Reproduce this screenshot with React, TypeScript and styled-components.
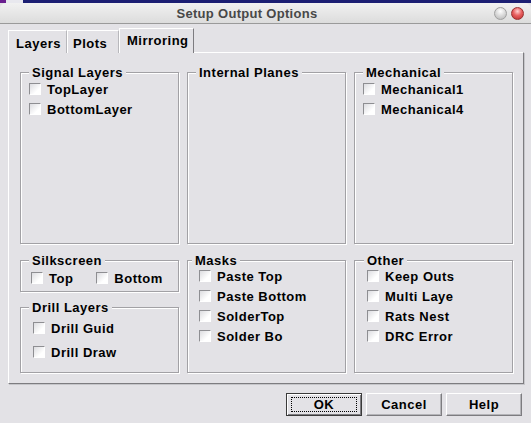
import { createGlobalStyle } from 'styled-components';
import styled from 'styled-components';

const Colors = {
  face: '#e3e2e6',
  light: '#ffffff',
  etch: '#a2a1a5',
  shadow: '#7d7c80',
  dark: '#3a3a3a',
  text: '#000000',
};

const GlobalStyle = createGlobalStyle`
  html, body {
    margin: 0;
    padding: 0;
    background: ${Colors.face};
  }
  body {
    font-family: "Liberation Sans", Arial, sans-serif;
  }
`;

export const Window = styled.div`
  width: 531px;
  height: 423px;
  display: flex;
  flex-direction: column;
  background: ${Colors.face};
  overflow: hidden;
  font-family: "Liberation Sans", Arial, sans-serif;
  font-weight: bold;
  font-size: 13px;
  letter-spacing: 0.5px;
  color: ${Colors.text};
`;

export const TopStrip = styled.div`
  height: 3px;
  background: linear-gradient(
    to right,
    #6a1f8f 0,
    #6a1f8f 6px,
    #e8e8ee 6px,
    #e8e8ee 23px,
    #1c1f73 23px
  );
`;

export const TitleBar = styled.div`
  height: 20px;
  display: flex;
  align-items: center;
  background: linear-gradient(#f1f1f1, #dcdcdc);
  border-bottom: 1px solid #9a9a9a;
  border-top-left-radius: 6px;
  border-top-right-radius: 6px;
`;

export const TitleText = styled.div`
  flex: 1;
  text-align: center;
  color: #484848;
  letter-spacing: 0.3px;
  font-size: 13px;
`;

export const TitleButtons = styled.div`
  display: flex;
  gap: 4px;
  padding-right: 7px;
`;

export const Orb = styled.div<{ tone: 'gray' | 'red' }>`
  width: 13px;
  height: 13px;
  border-radius: 50%;
  border: 1px solid ${({ tone }) => (tone === 'red' ? '#9a3030' : '#a0a0a0')};
  box-sizing: border-box;
  background: ${({ tone }) =>
    tone === 'red'
      ? 'radial-gradient(circle at 50% 30%, #ffd0d0 0, #e86060 45%, #b82a2a 100%)'
      : 'radial-gradient(circle at 50% 30%, #ffffff 0, #dcdcdc 45%, #b4b4b4 100%)'};
`;

export const Body = styled.div`
  flex: 1;
  display: flex;
  flex-direction: column;
  padding: 5px 0 0 8px;
`;

export const TabRow = styled.div`
  display: flex;
  align-items: flex-end;
  height: 24px;
  margin-bottom: -1px;
  position: relative;
  z-index: 1;
`;

export const Tab = styled.div<{ active?: boolean; w: number; pad: number }>`
  box-sizing: border-box;
  width: ${({ w }) => w}px;
  height: ${({ active }) => (active ? 25 : 23)}px;
  padding-left: ${({ pad }) => pad}px;
  padding-top: ${({ active }) => (active ? 4 : 5)}px;
  border-top: 1px solid ${Colors.light};
  border-left: 1px solid ${Colors.light};
  border-right: 1px solid ${({ active }) => (active ? Colors.shadow : '#b8b8bc')};
  background: ${Colors.face};
  white-space: nowrap;
`;

export const Panel = styled.div`
  box-sizing: border-box;
  width: 516px;
  height: 332px;
  border-top: 1px solid ${Colors.light};
  border-left: 1px solid ${Colors.light};
  border-right: 1px solid ${Colors.shadow};
  border-bottom: 1px solid ${Colors.shadow};
  box-shadow: 1px 1px 0 #c6c6ca;
  padding: 19px 0 0 11px;
  display: grid;
  grid-template-columns: 159px 159px 159px;
  grid-template-rows: 172px 113px;
  column-gap: 8px;
  row-gap: 16px;
`;

export const Stack = styled.div`
  display: flex;
  flex-direction: column;
  gap: 15px;
`;

export const Group = styled.div<{ h?: number; inset: number; top: number }>`
  position: relative;
  box-sizing: border-box;
  height: ${({ h }) => (h ? `${h}px` : '100%')};
  border: 1px solid ${Colors.etch};
  box-shadow: inset 1px 1px 0 ${Colors.light}, 1px 1px 0 ${Colors.light};
  padding: ${({ top }) => top}px 0 0 ${({ inset }) => inset}px;
  display: flex;
  flex-direction: column;
`;

export const Caption = styled.span<{ left: number }>`
  position: absolute;
  top: -8px;
  left: ${({ left }) => left}px;
  padding: 0 3px;
  line-height: 15px;
  background: ${Colors.face};
`;

export const CheckRow = styled.label<{ pitch: number }>`
  display: flex;
  align-items: center;
  gap: 6px;
  height: ${({ pitch }) => pitch}px;
  white-space: nowrap;
`;

export const InlineRow = styled.div`
  display: flex;
  gap: 23px;
`;

export const Box = styled.span`
  box-sizing: border-box;
  flex: none;
  width: 12px;
  height: 12px;
  border-top: 1px solid #8e8e92;
  border-left: 1px solid #8e8e92;
  border-right: 1px solid ${Colors.light};
  border-bottom: 1px solid ${Colors.light};
  background: linear-gradient(135deg, #dcdce0, #ffffff 70%);
`;

export const ButtonRow = styled.div`
  display: flex;
  justify-content: flex-end;
  gap: 4px;
  padding: 9px 9px 0 0;
`;

export const Button = styled.div<{ primary?: boolean }>`
  box-sizing: border-box;
  width: 76px;
  height: 23px;
  display: flex;
  align-items: center;
  justify-content: center;
  background: ${Colors.face};
  border-top: 1px solid ${({ primary }) => (primary ? Colors.dark : Colors.light)};
  border-left: 1px solid ${({ primary }) => (primary ? Colors.dark : Colors.light)};
  border-right: 1px solid ${({ primary }) => (primary ? Colors.dark : Colors.shadow)};
  border-bottom: 1px solid ${({ primary }) => (primary ? Colors.dark : Colors.shadow)};
  box-shadow: ${({ primary }) =>
    primary
      ? `inset 1px 1px 0 ${Colors.light}, inset -1px -1px 0 ${Colors.shadow}`
      : `inset -1px -1px 0 #b4b4b8`};
`;

export const Focus = styled.span`
  box-sizing: border-box;
  width: 66px;
  height: 15px;
  display: flex;
  align-items: center;
  justify-content: center;
  border: 1px dotted #000;
`;

interface CheckListProps {
  labels: string[];
  pitch: number;
}

function CheckList({ labels, pitch }: CheckListProps) {
  return (
    <>
      {labels.map((label) => (
        <CheckRow pitch={pitch} key={label}>
          <Box />
          {label}
        </CheckRow>
      ))}
    </>
  );
}

export default function App() {
  return (
    <Window>
      <GlobalStyle />
      <TopStrip />
      <TitleBar>
        <TitleText>Setup Output Options</TitleText>
        <TitleButtons>
          <Orb tone="gray" />
          <Orb tone="red" />
        </TitleButtons>
      </TitleBar>
      <Body>
        <TabRow>
          <Tab w={59} pad={7}>Layers</Tab>
          <Tab w={52} pad={5}>Plots</Tab>
          <Tab w={75} pad={7} active>
            Mirroring
          </Tab>
        </TabRow>
        <Panel>
          <Group inset={8} top={6}>
            <Caption left={8}>Signal Layers</Caption>
            <CheckList pitch={20} labels={['TopLayer', 'BottomLayer']} />
          </Group>
          <Group inset={8} top={6}>
            <Caption left={8}>Internal Planes</Caption>
          </Group>
          <Group inset={8} top={6}>
            <Caption left={8}>Mechanical</Caption>
            <CheckList pitch={20} labels={['Mechanical1', 'Mechanical4']} />
          </Group>
          <Stack>
            <Group h={32} inset={10} top={7}>
              <Caption left={8}>Silkscreen</Caption>
              <InlineRow>
                <CheckList pitch={20} labels={['Top']} />
                <CheckList pitch={20} labels={['Bottom']} />
              </InlineRow>
            </Group>
            <Group h={66} inset={12} top={8}>
              <Caption left={8}>Drill Layers</Caption>
              <CheckList pitch={24} labels={['Drill Guid', 'Drill Draw']} />
            </Group>
          </Stack>
          <Group inset={11} top={5}>
            <Caption left={4}>Masks</Caption>
            <CheckList
              pitch={20}
              labels={['Paste Top', 'Paste Bottom', 'SolderTop', 'Solder Bo']}
            />
          </Group>
          <Group inset={12} top={5}>
            <Caption left={9}>Other</Caption>
            <CheckList
              pitch={20}
              labels={['Keep Outs', 'Multi Laye', 'Rats Nest', 'DRC Error']}
            />
          </Group>
        </Panel>
        <ButtonRow>
          <Button primary>
            <Focus>OK</Focus>
          </Button>
          <Button>Cancel</Button>
          <Button>Help</Button>
        </ButtonRow>
      </Body>
    </Window>
  );
}
